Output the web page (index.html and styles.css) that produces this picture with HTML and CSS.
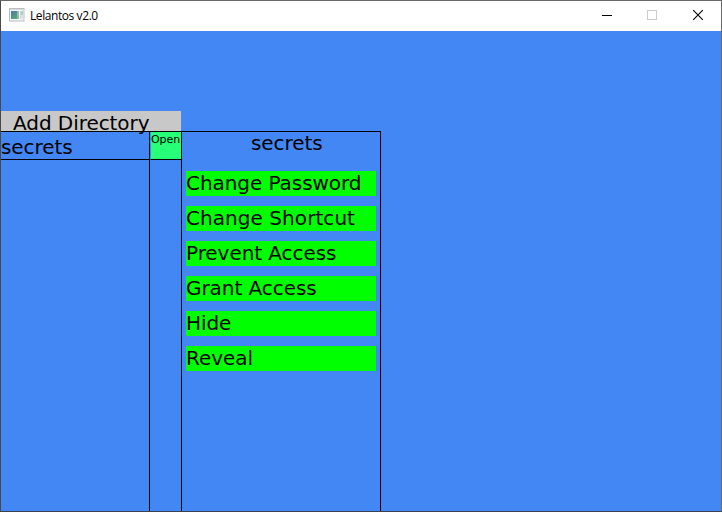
FILE: index.html
```html
<!DOCTYPE html>
<html lang="en">
<head>
<meta charset="utf-8">
<title>Lelantos v2.0</title>
<link rel="stylesheet" href="styles.css">
</head>
<body>
<div class="window">
  <header class="titlebar">
    <svg class="app-icon" width="16" height="14" viewBox="0 0 16 14">
      <defs><linearGradient id="g" x1="0" y1="0" x2="0.6" y2="1"><stop offset="0" stop-color="#4a74a8"/><stop offset="1" stop-color="#52a979"/></linearGradient></defs>
      <rect x="0.5" y="0.5" width="14.5" height="12.5" fill="#f3f4f5" stroke="#b9bec3"/>
      <rect x="1" y="1" width="14" height="1" fill="#d5dadf"/>
      <rect x="2" y="3" width="6" height="8" fill="url(#g)"/>
      <rect x="8" y="3" width="2" height="8" fill="#99b6ad"/>
      <rect x="11" y="3" width="1" height="8" fill="#cfd4d8"/>
      <rect x="12" y="3" width="2" height="4" fill="#a8d0c0"/>
      <rect x="12" y="7" width="2" height="4" fill="#dfe3e6"/>
    </svg>
    <span class="title">Lelantos v2.0</span>
    <div class="controls">
      <svg width="46" height="30" viewBox="0 0 46 30"><path d="M18 14.5h10" stroke="#000"/></svg>
      <svg width="45" height="30" viewBox="0 0 45 30"><rect x="17.5" y="9.5" width="9" height="9" fill="none" stroke="#ccc"/></svg>
      <svg width="46" height="30" viewBox="0 0 46 30"><path d="M18.2 9.2l9.6 9.6M27.8 9.2l-9.6 9.6" stroke="#000" stroke-width="1.1"/></svg>
    </div>
  </header>
  <main class="content">
    <div class="add">Add Directory</div>
    <div class="panes">
      <section class="names"><div class="name">secrets</div></section>
      <section class="opens"><div class="open">Open</div></section>
      <section class="details">
        <h1 class="heading">secrets</h1>
        <div class="actions">
          <div class="action">Change Password</div>
          <div class="action shortcut">Change Shortcut</div>
          <div class="action">Prevent Access</div>
          <div class="action">Grant Access</div>
          <div class="action">Hide</div>
          <div class="action">Reveal</div>
        </div>
      </section>
    </div>
  </main>
</div>
</body>
</html>
```
FILE: styles.css
```css
* { box-sizing: border-box; }
body { margin: 0; overflow: hidden; }
.window {
  width: 722px;
  height: 512px;
  display: flex;
  flex-direction: column;
  border: 1px solid;
  border-color: #68686a #6b6b6b #38424f #4c4848;
  background: #4287f4;
}
.titlebar {
  height: 30px;
  flex: none;
  display: flex;
  align-items: center;
  padding-left: 8px;
  background: #fff;
}
.app-icon { flex: none; margin-top: -2px; }
.title {
  margin-left: 5px;
  font: 12px/16px "Open Sans", sans-serif;
  letter-spacing: -0.42px;
  color: #000;
}
.controls { display: flex; margin-left: auto; }
.controls svg { display: block; }
.content {
  flex: 1;
  display: flex;
  flex-direction: column;
  padding-top: 80px;
  font: 20px/24px "DejaVu Sans", sans-serif;
  letter-spacing: -0.06px;
  color: #000;
  white-space: nowrap;
}
.add {
  width: 180px;
  height: 20px;
  flex: none;
  padding-left: 12px;
  background: #c8c8c8;
  position: relative;
  z-index: 1;
}
.panes {
  flex: 1;
  width: 380px;
  display: grid;
  grid-template-columns: 149px 32px 199px;
  border-top: 1px solid #000;
}
.names, .opens, .details { border-right: 1px solid #000; }
.name { height: 28px; line-height: 30px; border-bottom: 1px solid #000; }
.open {
  height: 28px;
  border-left: 1px solid #4287f4;
  border-bottom: 1px solid #000;
  background: #28ff78;
  font-size: 11px;
  line-height: 15px;
}
.heading { margin: 0; padding-left: 69px; height: 39px; font: inherit; line-height: 22px; }
.actions { display: grid; gap: 10px; padding: 0 4px; }
.action { height: 25px; background: #0f0; }
.shortcut { letter-spacing: 0.06px; }
```
